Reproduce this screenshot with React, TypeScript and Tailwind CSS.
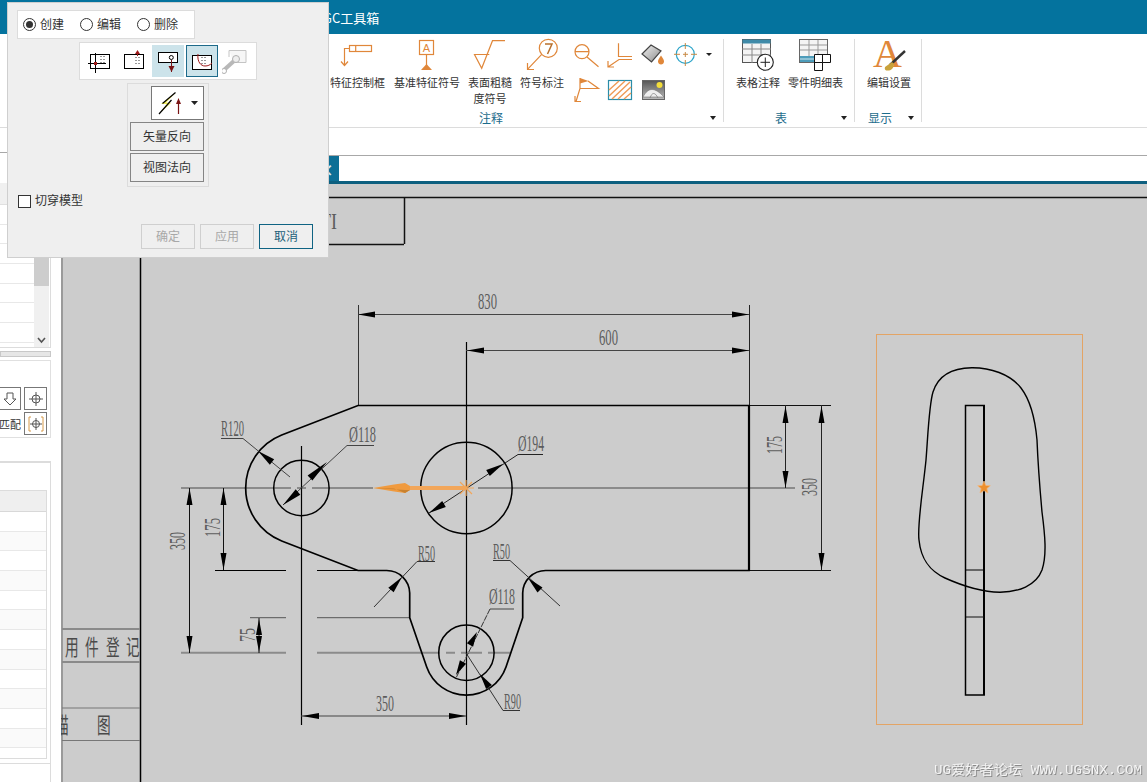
import React from "react";

const OR = "#e0873a";
const RED = "#7a1414";

function Arrow({ t, b, w = 7, c = "#000" }: { t: number[]; b: number[]; w?: number; c?: string }) {
  const dx = b[0] - t[0];
  const dy = b[1] - t[1];
  const l = Math.hypot(dx, dy) || 1;
  const nx = (-dy / l) * (w / 2);
  const ny = (dx / l) * (w / 2);
  return <polygon points={`${t[0]},${t[1]} ${b[0] + nx},${b[1] + ny} ${b[0] - nx},${b[1] - ny}`} fill={c} />;
}

function Dim({ x, y, s, len, size = 24 }: { x: number; y: number; s: string; len: number; size?: number }) {
  return (
    <text x={x} y={y} textLength={len} lengthAdjust="spacingAndGlyphs" fontSize={size} fill="#5c5c5c" className="font-['Liberation_Serif',serif]">
      {s}
    </text>
  );
}

function VDim({ x, y, s, len }: { x: number; y: number; s: string; len: number }) {
  return (
    <text x={x} y={y} transform={`rotate(-90 ${x} ${y})`} textLength={len} lengthAdjust="spacingAndGlyphs" fontSize={24} fill="#5c5c5c" className="font-['Liberation_Serif',serif]">
      {s}
    </text>
  );
}

function Cjk({ x, y, s }: { x: number; y: number; s: string }) {
  return (
    <text transform={`translate(${x} ${y}) scale(0.62 1)`} fontSize={22} fill="#4a4a4a" className="font-['Noto_Sans_CJK_SC',sans-serif]">
      {s}
    </text>
  );
}

function L({ p, c = "#222", w = 1 }: { p: number[]; c?: string; w?: number }) {
  return <line x1={p[0]} y1={p[1]} x2={p[2]} y2={p[3]} stroke={c} strokeWidth={w} />;
}

function Drawing() {
  const CL = "#8b8b8b";
  return (
    <svg width="1086" height="598" viewBox="61 184 1086 598" className="block shrink-0">
      {/* sheet frame */}
      <L p={[62, 184, 62, 782]} c="#8a8a8a" w={1.5} />
      <L p={[62, 197.5, 1147, 197.5]} c="#111" w={1.5} />
      <L p={[140.5, 197, 140.5, 782]} c="#000" w={1.5} />
      <L p={[404.5, 197, 404.5, 244]} c="#111" w={1.5} />
      <L p={[140, 244.5, 404, 244.5]} c="#111" w={1.5} />
      <Dim x={320} y={229} s="TI" len={17} />
      <L p={[62, 629, 140, 629]} c="#8a8a8a" w={2} />
      <L p={[62, 662, 140, 662]} c="#8a8a8a" w={2} />
      <L p={[62, 708, 140, 708]} c="#777" w={1} />
      <L p={[62, 740.5, 140, 740.5]} c="#777" w={1} />
      <Cjk x={65} y={655} s="用" />
      <Cjk x={85} y={655} s="件" />
      <Cjk x={106} y={655} s="登" />
      <Cjk x={126} y={655} s="记" />
      <Cjk x={55} y={733} s="描" />
      <Cjk x={97} y={733} s="图" />

      {/* centre lines */}
      <path d="M181 488H291M297 488H306M312 488H373M478 488H795" stroke={CL} strokeWidth={2} fill="none" />
      <path d="M181 652.7H286M317 652.7H440M446 652.7H455M461 652.7H482M488 652.7H510" stroke={CL} strokeWidth={2} fill="none" />
      <path d="M250 617.7H286M317 617.7H410" stroke="#555" strokeWidth={1} fill="none" />
      <path d="M215 570.5H286M317 570.5H358" stroke="#000" strokeWidth={1.2} fill="none" />
      <L p={[749, 405.5, 831, 405.5]} c="#111" w={1} />
      <L p={[749, 570.5, 831, 570.5]} c="#111" w={1} />

      {/* verticals */}
      <L p={[466.5, 342, 466.5, 725]} c="#000" w={1.2} />
      <L p={[301.5, 446, 301.5, 725]} c="#000" w={1.2} />
      <L p={[358.5, 305, 358.5, 405]} c="#333" w={1} />
      <L p={[749.5, 305, 749.5, 405]} c="#222" w={1} />

      {/* outline */}
      <path
        d="M358 405.5H749V570.5H546A23 23 0 0 0 522.7 593V617.7L506 667A42 42 0 0 1 426.7 667L409.7 617.7V593A23 23 0 0 0 386.7 570.5H358L281.7 541A57 57 0 0 1 281.7 435L358 405.5Z"
        fill="none"
        stroke="#000"
        strokeWidth={1.7}
      />
      <L p={[749, 405, 749, 571]} c="#000" w={2.2} />
      <circle cx={301.4} cy={488} r={27.7} fill="none" stroke="#000" strokeWidth={1.5} />
      <circle cx={466.4} cy={488} r={45.7} fill="none" stroke="#000" strokeWidth={1.5} />
      <circle cx={466.4} cy={652.7} r={27.7} fill="none" stroke="#000" strokeWidth={1.5} />

      {/* linear dimensions */}
      <L p={[358, 314.5, 749, 314.5]} c="#444" />
      <Arrow t={[358, 314.5]} b={[375, 314.5]} w={6} />
      <Arrow t={[749, 314.5]} b={[732, 314.5]} w={6} />
      <L p={[466, 350.5, 749, 350.5]} c="#444" />
      <Arrow t={[467, 350.5]} b={[484, 350.5]} w={6} />
      <Arrow t={[749, 350.5]} b={[732, 350.5]} w={6} />
      <L p={[301, 716, 466, 716]} c="#444" />
      <Arrow t={[302, 716]} b={[319, 716]} w={6} />
      <Arrow t={[466, 716]} b={[449, 716]} w={6} />
      <L p={[785.5, 405, 785.5, 488]} c="#222" />
      <Arrow t={[785.5, 406]} b={[785.5, 423]} w={6} />
      <Arrow t={[785.5, 488]} b={[785.5, 471]} w={6} />
      <L p={[821.5, 405, 821.5, 570]} c="#222" />
      <Arrow t={[821.5, 406]} b={[821.5, 423]} w={6} />
      <Arrow t={[821.5, 570]} b={[821.5, 553]} w={6} />
      <L p={[189.5, 488, 189.5, 653]} c="#111" />
      <Arrow t={[189.5, 488]} b={[189.5, 505]} w={6} />
      <Arrow t={[189.5, 653]} b={[189.5, 636]} w={6} />
      <L p={[223.5, 488, 223.5, 570]} c="#111" />
      <Arrow t={[223.5, 488]} b={[223.5, 505]} w={6} />
      <Arrow t={[223.5, 570]} b={[223.5, 553]} w={6} />
      <L p={[259, 618, 259, 653]} c="#111" />
      <Arrow t={[259, 619]} b={[259, 635]} w={6} />
      <Arrow t={[259, 652]} b={[259, 636]} w={6} />

      {/* leaders */}
      <path d="M221 438.5H243L290 477" stroke="#444" fill="none" />
      <Arrow t={[258, 451]} b={[272, 462]} w={7} />
      <path d="M374 445.5H347L283 505" stroke="#444" fill="none" />
      <Arrow t={[327, 462]} b={[310, 478]} w={7} />
      <Arrow t={[283, 505]} b={[298, 492]} w={7} />
      <path d="M543 454.5H518L429 513" stroke="#222" fill="none" />
      <Arrow t={[503, 464]} b={[488, 473]} w={7} />
      <Arrow t={[429, 513]} b={[444, 504]} w={7} />
      <path d="M435 561.5H417L374 607" stroke="#333" fill="none" />
      <Arrow t={[402, 577]} b={[391, 590]} w={7} />
      <path d="M493 560.5H510L560 606" stroke="#333" fill="none" />
      <Arrow t={[528, 578]} b={[540, 590]} w={7} />
      <path d="M514 609H490" stroke="#444" fill="none" />
      <path d="M490 609L456 678" stroke="#333" strokeDasharray="6 1" fill="none" />
      <Arrow t={[477, 632]} b={[470, 645]} w={7} />
      <Arrow t={[456, 675]} b={[463, 662]} w={7} />
      <path d="M520 710.5H503L466 653" stroke="#333" fill="none" />
      <Arrow t={[480, 674]} b={[489, 687]} w={7} />

      {/* dimension text */}
      <Dim x={478} y={309} s="830" len={19} />
      <Dim x={599} y={345} s="600" len={19} />
      <Dim x={376} y={711} s="350" len={18} />
      <Dim x={221} y={436} s="R120" len={23} />
      <Dim x={349} y={442} s="Ø118" len={27} />
      <Dim x={518} y={451} s="Ø194" len={26} />
      <Dim x={418} y={561} s="R50" len={17} />
      <Dim x={493} y={559} s="R50" len={17} />
      <Dim x={489} y={604} s="Ø118" len={26} />
      <Dim x={504} y={709} s="R90" len={17} />
      <VDim x={185} y={550} s="350" len={18} />
      <VDim x={220} y={537} s="175" len={19} />
      <VDim x={255} y={642} s="75" len={14} />
      <VDim x={782} y={454} s="175" len={18} />
      <VDim x={817} y={496} s="350" len={18} />

      {/* orange arrow on the section line */}
      <rect x={408} y={486} width={58} height={4} fill="#f2a65a" />
      <polygon points="373,488 394,484.5 405,483 410,486 410,490 405,493 394,491.5" fill="#f09a3e" />
      <polygon points="373,488 394,488.5 405,493 410,490 405,490" fill="#c9822f" />
      <path d="M460 482L472 494M472 482L460 494M466 480V496M458 488H474" stroke="#f2a65a" strokeWidth={1.2} />

      {/* right view */}
      <rect x={876.5} y={334.5} width={206} height={390} fill="none" stroke="#e3a465" strokeWidth={1} />
      <path
        d="M971.7 367.7C990 367.5 1010 374 1021 388C1031 401 1035 418 1037 440C1038 465 1040 490 1042 512C1045 535 1047 555 1042 570C1036 586 1018 592 1000 592.3C985 592 965 587 945 578C930 571 921 560 919 540C917 525 923 490 926 460C928 435 929 405 933 392C938 376 952 368 971.7 367.7Z"
        fill="none"
        stroke="#000"
        strokeWidth={1.4}
      />
      <rect x={965.5} y={405.5} width={18.7} height={289.5} fill="none" stroke="#000" strokeWidth={1.5} />
      <L p={[984, 405, 984, 695]} c="#000" w={2} />
      <L p={[966, 570, 984, 570]} c="#000" />
      <L p={[966, 617, 984, 617]} c="#111" />
      <polygon
        points="984,481 985.8,485.4 990.3,485.7 986.9,488.6 988,493 984,490.6 980,493 981.1,488.6 977.7,485.7 982.2,485.4"
        fill="#ec8f2e"
        stroke="#f2b67a"
        strokeWidth={0.8}
      />

      {/* watermark */}
      <text
        x={934}
        y={774}
        textLength={208}
        lengthAdjust="spacingAndGlyphs"
        fontSize={13}
        fill="#f4f4f4"
        className="font-['Liberation_Mono','Noto_Sans_CJK_SC',monospace] [filter:drop-shadow(1px_1px_0_#8a8a8a)]"
      >
        UG爱好者论坛 WWW.UGSNX.COM
      </text>
    </svg>
  );
}

function RibbonItem({ label, w, vb, children }: { label: React.ReactNode; w: number; vb: string; children: React.ReactNode }) {
  return (
    <div className="flex flex-col items-center" style={{ width: w }}>
      <svg width={w} height="36" viewBox={vb} className="block overflow-visible">
        {children}
      </svg>
      <div className="w-full text-center text-[11px] leading-[16px] text-[#333]">{label}</div>
    </div>
  );
}

function Tri({ c = "#222" }: { c?: string }) {
  return <span className="h-0 w-0 border-x-[3.5px] border-t-[4px] border-x-transparent" style={{ borderTopColor: c }} />;
}

function Ribbon() {
  return (
    <div className="flex h-[94px] shrink-0 border-b border-[#dcdcdc] bg-white">
      {/* annotation group */}
      <div className="relative ml-[275px] flex h-[93px] w-[448px] flex-col border-r-0">
        <div className="flex flex-1 pl-[55px] pt-[4px]">
          <RibbonItem w={55} vb="330 38 55 36" label="特征控制框">
            <g fill="none" stroke={OR} strokeWidth={1.2}>
              <rect x={349.5} y={45.5} width={22} height={6} />
              <path d="M355.7 45.5V51.5M349 48.5H344.5V65" />
              <path d="M341 61.5L344.5 65.5L348 61.5" />
            </g>
          </RibbonItem>
          <div className="w-[9px]" />
          <RibbonItem w={66} vb="394 38 66 36" label="基准特征符号">
            <rect x={419.5} y={40.5} width={14} height={14} fill="none" stroke={OR} strokeWidth={1.2} />
            <text x={426.5} y={52} textAnchor="middle" fontSize={11} fill={OR} className="font-['Liberation_Sans',sans-serif]">A</text>
            <path d="M426.5 54.5V66" stroke={OR} strokeWidth={1.2} />
            <polygon points="421,70 432,70 426.5,64" fill={OR} />
          </RibbonItem>
          <div className="w-[7px]" />
          <RibbonItem
            w={46}
            vb="467 38 46 36"
            label={
              <>
                表面粗糙
                <br />
                度符号
              </>
            }
          >
            <path d="M489.3 54.5H474.5L481.7 68.3L492.5 40.7H505" fill="none" stroke={OR} strokeWidth={1.2} />
          </RibbonItem>
          <div className="w-[7px]" />
          <RibbonItem w={44} vb="520 38 44 36" label="符号标注">
            <circle cx={548.3} cy={48.3} r={9} fill="none" stroke={OR} strokeWidth={1.2} />
            <path d="M545 44H552L547.5 54" fill="none" stroke="#b8702c" strokeWidth={1.5} />
            <path d="M541.7 54.3L527.5 69.3M527.5 63V69.5H534" fill="none" stroke={OR} strokeWidth={1.2} />
          </RibbonItem>
          <svg width="146" height="68" viewBox="570 38 146 68" className="ml-[6px] block">
            <g fill="none" stroke={OR} strokeWidth={1.2}>
              <circle cx={582} cy={51.7} r={7} />
              <path d="M575 51.7H589M587 57L598.5 66.7" />
              <path d="M618.5 43.3V56.5H632M632 59.5H619L608 67M608 61V67H614" />
              <path d="M580 78V88.5L576 101.5M575 96V101.5H581M580 88.5H598.5L588 81" />
            </g>
            <polygon points="580,78 588.5,81 580,83.5" fill={OR} />
            <defs>
              <linearGradient id="bucket" x1="0" y1="0" x2="1" y2="1">
                <stop offset="0" stopColor="#f2f2f2" />
                <stop offset="1" stopColor="#8c8c8c" />
              </linearGradient>
              <linearGradient id="pic" x1="0" y1="0" x2="0" y2="1">
                <stop offset="0" stopColor="#555" />
                <stop offset="1" stopColor="#bbb" />
              </linearGradient>
            </defs>
            <polygon points="642,54 651,45 661,51 651.5,62" fill="url(#bucket)" stroke="#444" strokeWidth={1.2} />
            <path d="M661 55.5C659 58.5 658 60 658 61.5C658 63.5 659.5 64.5 661 64.5C662.5 64.5 664 63.5 664 61.5C664 60 663 58.5 661 55.5Z" fill={OR} />
            <circle cx={685.3} cy={54.3} r={9} fill="none" stroke="#2ba4c9" strokeWidth={1.2} />
            <path d="M685.3 43V49M685.3 52V57M685.3 60V66M674 54.3H680M683 54.3H688M691 54.3H697" stroke="#c98a45" strokeWidth={1} />
            <polygon points="706,53 712,53 709,56" fill="#222" />
            <rect x={608.5} y={80.5} width={23} height={19} fill="#fff" stroke="#2a8da8" strokeWidth={1.2} />
            <path d="M609 90L619 81M609 96L625 81M612 99L630 82M618 99L631 87M624 99L631 93" stroke="#ef9a55" strokeWidth={1.4} />
            <rect x={642.5} y={80.5} width={22} height={19} fill="url(#pic)" stroke="#666" />
            <circle cx={659.5} cy={85} r={3} fill="#f3dd3a" />
            <path d="M643 97C648 87 655 87 664 97Z" fill="#eee" stroke="#777" strokeWidth={0.6} />
            <path d="M650 98C652 92 655 92 658 98" fill="none" stroke="#777" strokeWidth={0.7} />
          </svg>
        </div>
        <div className="flex h-[21px] items-start justify-center pr-[16px] pt-[4px] text-[12px] leading-[16px] text-[#1c6c8c]">注释</div>
        <span className="absolute bottom-[7px] right-[7px] flex">
          <Tri />
        </span>
      </div>
      <div className="my-[5px] w-[1px] bg-[#dcdcdc]" />

      {/* table group */}
      <div className="relative flex h-[93px] w-[130px] flex-col">
        <div className="flex flex-1 gap-[8px] pl-[12px] pt-[4px]">
          <RibbonItem w={44} vb="736 38 44 36" label="表格注释">
            <rect x={742.5} y={39.5} width={28} height={23} fill="#f4f4f4" stroke="#555" />
            <rect x={742.5} y={39.5} width={28} height={4} fill="#3f8aa8" />
            <path d="M742 49H771M742 55H771M752 44V63M761 44V63" stroke="#888" />
            <circle cx={765.3} cy={62.3} r={8} fill="#fff" stroke="#222" strokeWidth={1.1} />
            <path d="M765.3 57.5V67M760.5 62.3H770" stroke="#222" strokeWidth={1} />
          </RibbonItem>
          <RibbonItem w={55} vb="788 38 55 36" label="零件明细表">
            <rect x={799.5} y={39.5} width={28} height={23} fill="#f4f4f4" stroke="#666" />
            <path d="M800 45H827M800 50H827M809 40V56M818 40V56" stroke="#999" />
            <rect x={800} y={56} width={27} height={6} fill="#4d9cba" />
            <path d="M800 59H827" stroke="#cfe6ee" />
            <path d="M814.5 54.5H830.5V62.5H822.5V70.5H814.5ZM814.5 62.5H822.5M822.5 54.5V62.5" fill="#fff" stroke="#111" strokeWidth={1} />
          </RibbonItem>
        </div>
        <div className="flex h-[21px] items-start justify-center pr-[16px] pt-[4px] text-[12px] leading-[16px] text-[#1c6c8c]">表</div>
        <span className="absolute bottom-[7px] right-[7px] flex">
          <Tri />
        </span>
      </div>
      <div className="my-[5px] w-[1px] bg-[#dcdcdc]" />

      {/* display group */}
      <div className="relative flex h-[93px] w-[66px] flex-col">
        <div className="flex flex-1 pl-[12px] pt-[4px]">
          <RibbonItem w={44} vb="867 38 44 36" label="编辑设置">
            <text x={887.5} y={66.5} textAnchor="middle" fontSize={40} fill={OR} className="font-['Liberation_Serif',serif]">A</text>
            <path d="M905 51L890 65" stroke="#333" strokeWidth={2.4} />
            <path d="M892 62L885 67C884 70 886 71 889 70.5C892 70 894 67 894 64Z" fill="#c9a23c" />
          </RibbonItem>
        </div>
        <div className="flex h-[21px] items-start justify-center pr-[16px] pt-[4px] text-[12px] leading-[16px] text-[#1c6c8c]">显示</div>
        <span className="absolute bottom-[7px] right-[7px] flex">
          <Tri />
        </span>
      </div>
      <div className="my-[5px] w-[1px] bg-[#dcdcdc]" />
    </div>
  );
}

function Sidebar() {
  const upper = [0, 1, 2, 3, 4, 5, 6];
  const rows = [0, 1, 2, 3, 4, 5, 6, 7, 8, 9, 10, 11];
  return (
    <div className="flex w-[61px] shrink-0 flex-col bg-white">
      <div className="h-[25px] shrink-0 border-b border-[#a8a8a8]" />
      <div className="h-[30px] shrink-0" />
      <div className="flex h-[165px] w-[51px] shrink-0 border-r border-b border-[#dcdcdc]">
        <div className="flex w-[34px] flex-col">
          <div className="h-[22px] shrink-0 border-b border-[#e0e0e0] bg-[#f0f0f0]" />
          {upper.map((i) => (
            <div key={i} className="h-[19.7px] shrink-0 border-b border-[#e8e8e8]" />
          ))}
        </div>
        <div className="flex w-[15px] flex-col items-center bg-[#f0f0f0]">
          <div className="h-[103px] w-full bg-[#cdcdcd]" />
          <svg width="9" height="7" viewBox="0 0 9 7" className="mt-[51px] block">
            <path d="M1 1L4.5 5L8 1" fill="none" stroke="#555" strokeWidth={1.6} />
          </svg>
        </div>
      </div>
      <div className="mt-[3px] h-[6px] w-[51px] shrink-0 border border-[#c8c8c8] bg-[#e6e6e6]" />
      <div className="mt-[3px] flex h-[78px] w-[51px] shrink-0 flex-col gap-[2px] border-y border-r border-[#e0e0e0] pt-[26px]">
        <div className="flex items-start justify-end gap-[3px] pr-[3px]">
          <div className="flex h-[23px] w-[21px] items-center justify-center border border-l-0 border-[#777] bg-white">
            <svg width="16" height="16" viewBox="0 0 16 16">
              <path d="M5 2H11V8H14L8 14L2 8H5Z" fill="none" stroke="#555" strokeWidth={1} />
            </svg>
          </div>
          <div className="flex h-[23px] w-[23px] items-center justify-center border border-[#777] bg-white">
            <svg width="16" height="16" viewBox="0 0 16 16">
              <circle cx={8} cy={8} r={4} fill="none" stroke="#555" />
              <path d="M8 1V15M1 8H15" stroke="#555" />
            </svg>
          </div>
        </div>
        <div className="flex items-center justify-end gap-[3px] pr-[3px]">
          <span className="flex w-[21px] justify-end overflow-hidden whitespace-nowrap text-[11px] leading-[16px] text-[#333]">匹配</span>
          <div className="flex h-[23px] w-[23px] items-center justify-center border border-[#777] bg-white">
            <svg width="18" height="18" viewBox="0 0 18 18">
              <path d="M4 2H2V16H4M14 2H16V16H14" fill="none" stroke="#d69a4a" />
              <circle cx={9} cy={9} r={3.5} fill="none" stroke="#555" />
              <path d="M9 3V15M3 9H15" stroke="#555" />
            </svg>
          </div>
        </div>
      </div>
      <div className="h-[23px] shrink-0" />
      <div className="h-[302px] w-[51px] shrink-0 border-t-2 border-r border-[#dcdcdc] pt-[27px]">
        <div className="flex h-[269px] w-[47px] flex-col border-y border-r border-[#dcdcdc]">
          <div className="h-[21px] shrink-0 border-b border-[#d8d8d8] bg-[#efefef]" />
          {rows.map((i) => (
            <div key={i} className={`h-[19.7px] shrink-0 border-b border-[#e8e8e8] ${i % 2 === 0 ? "bg-white" : "bg-[#fafafa]"}`} />
          ))}
        </div>
      </div>
      <div className="w-[51px] flex-1 border-t border-r border-[#dcdcdc]" />
    </div>
  );
}

function Cell({ kind, children }: { kind?: "hot" | "sel"; children: React.ReactNode }) {
  const cls =
    kind === "sel"
      ? "bg-[#cce3ea] border border-[#1d6a8a]"
      : kind === "hot"
        ? "bg-[#cce3ea] border border-[#cce3ea]"
        : "border border-transparent";
  return <div className={`flex h-[32px] w-[32px] items-center justify-center ${cls}`}>{children}</div>;
}

function Dots({ x, y }: { x: number; y: number }) {
  return <path d={`M${x} ${y}v1M${x + 3} ${y}v1M${x} ${y + 3}v1M${x + 3} ${y + 3}v1M${x} ${y + 6}v1M${x + 3} ${y + 6}v1`} stroke="#333" strokeWidth={1} />;
}

function Radio({ on, label }: { on?: boolean; label: string }) {
  return (
    <div className="flex w-[57px] items-center gap-[4px]">
      <span className="flex h-[13px] w-[13px] items-center justify-center rounded-full border border-[#333] bg-white">
        {on && <span className="h-[7px] w-[7px] rounded-full bg-[#333]" />}
      </span>
      <span className="pb-[2px] text-[12px] leading-[16px] text-[#333]">{label}</span>
    </div>
  );
}

function Btn({ label, tone }: { label: string; tone: "off" | "on" }) {
  return (
    <div
      className={`flex h-[25px] w-[54px] items-center justify-center border pb-[2px] text-[12px] ${
        tone === "off" ? "border-[#cfcfcf] text-[#a8a8a8]" : "border-[#0f6383] text-[#1c5f7a]"
      }`}
    >
      {label}
    </div>
  );
}

function Dialog() {
  return (
    <div className="absolute left-[7px] top-[2px] flex h-[256px] w-[322px] flex-col border border-[#cfcfcf] bg-[#efefef] pl-[9px] pt-[7px]">
      <div className="flex h-[29px] w-[178px] items-center border border-[#dcdcdc] bg-white pl-[5px]">
        <Radio on label="创建" />
        <Radio label="编辑" />
        <Radio label="删除" />
      </div>
      <div className="ml-[62px] mt-[3px] flex h-[38px] w-[178px] items-center justify-center border border-[#dcdcdc] bg-white">
        <Cell>
          <svg width="28" height="28" viewBox="86 47 28 28">
            <rect x={90.5} y={54.5} width={19} height={14} fill="#fff" stroke="#000" />
            <path d="M95.5 53V73M88 63.5H106" stroke="#000" />
            <Dots x={101} y={56} />
            <rect x={94} y={62} width={3} height={3} fill="#a01818" />
          </svg>
        </Cell>
        <div className="w-[2px]" />
        <Cell>
          <svg width="28" height="28" viewBox="120 47 28 28">
            <rect x={124.5} y={54.5} width={19} height={14} fill="#fff" stroke="#000" />
            <Dots x={136} y={57} />
            <path d="M137.5 50L135 54H140Z" fill="#a01818" />
            <path d="M137.5 52V56" stroke="#a01818" />
          </svg>
        </Cell>
        <div className="w-[2px]" />
        <Cell kind="hot">
          <svg width="28" height="28" viewBox="154 47 28 28">
            <rect x={158.5} y={52.5} width={19} height={10} fill="#fff" stroke="#000" />
            <circle cx={171.3} cy={57.5} r={2} fill="none" stroke="#000" />
            <path d="M171.5 60V72" stroke={RED} />
            <path d="M168.5 66H174.5L171.5 72Z" fill={RED} />
          </svg>
        </Cell>
        <div className="w-[2px]" />
        <Cell kind="sel">
          <svg width="28" height="28" viewBox="188 47 28 28">
            <rect x={192.5} y={55.5} width={19} height={14} fill="#fff" stroke="#000" />
            <Dots x={202} y={57} />
            <path d="M198 54C197 62 201 66 205 66C208 66 210 65 212 63" fill="none" stroke="#a01818" />
          </svg>
        </Cell>
        <div className="w-[2px]" />
        <Cell>
          <svg width="28" height="28" viewBox="222 47 28 28">
            <path d="M229 50.5H246V62.5H234" fill="#f6f6f6" stroke="#c4c4c4" />
            <path d="M229 50.5V57" stroke="#c4c4c4" />
            <path d="M224 70L235 60" stroke="#b8b8b8" strokeWidth={4} />
            <circle cx={236} cy={59} r={3.5} fill="#eee" stroke="#b0b0b0" />
            <circle cx={224} cy={71} r={2.5} fill="#fff" stroke="#b0b0b0" />
          </svg>
        </Cell>
      </div>
      <div className="ml-[110px] mt-[3px] flex h-[104px] w-[82px] flex-col items-end border border-[#dcdcdc] pr-[4px] pt-[2px]">
        <div className="flex h-[34px] w-[53px] items-center border border-[#777] bg-white">
          <svg width="51" height="32" viewBox="152 87 51 32" className="block">
            <polygon points="176,92.5 161,104 167,104 159,114 171,103 166,102.5" fill="#f2ee55" />
            <path d="M175.5 92.5L162.5 103.5M171.5 100L159 114" fill="none" stroke="#000" strokeWidth={1.2} />
            <path d="M178.5 102V114" stroke={RED} strokeWidth={1.2} />
            <path d="M178.5 98L176 104H181Z" fill={RED} />
            <path d="M191 101H198L194.5 105Z" fill="#222" />
          </svg>
        </div>
        <div className="mt-[2px] flex h-[29px] w-[74px] items-center justify-center border border-[#858585] pb-[2px] text-[12px] text-[#333]">矢量反向</div>
        <div className="mt-[2px] flex h-[29px] w-[74px] items-center justify-center border border-[#858585] pb-[2px] text-[12px] text-[#333]">视图法向</div>
      </div>
      <div className="mt-[5px] flex items-center gap-[4px] pl-[1px]">
        <span className="h-[13px] w-[13px] border border-[#333] bg-white" />
        <span className="pb-[2px] text-[12px] leading-[16px] text-[#333]">切穿模型</span>
      </div>
      <div className="mt-[14px] flex gap-[5px] pl-[124px]">
        <Btn label="确定" tone="off" />
        <Btn label="应用" tone="off" />
        <Btn label="取消" tone="on" />
      </div>
    </div>
  );
}

export default function App() {
  return (
    <div className="relative flex h-[782px] w-[1147px] flex-col overflow-hidden bg-white font-['Noto_Sans_CJK_SC','Liberation_Sans',sans-serif]">
      <div className="flex h-[34px] shrink-0 items-center bg-[#04739e] pl-[323px] pt-[1px] text-[13px] text-white">GC工具箱</div>
      <Ribbon />
      <div className="flex min-h-0 flex-1">
        <Sidebar />
        <div className="flex min-w-0 flex-1 flex-col">
          <div className="h-[28px] shrink-0 border-b border-[#a8a8a8] bg-white" />
          <div className="flex h-[25px] shrink-0 bg-white pl-[238px]">
            <div className="flex h-full w-[40px] items-center justify-end bg-[#0d6f96] pr-[5px] text-[16px] font-bold text-[#dfeef4]">×</div>
          </div>
          <div className="h-[3px] shrink-0 bg-[#0d5f7f]" />
          <div className="min-h-0 flex-1 overflow-hidden bg-[#cccccc]">
            <Drawing />
          </div>
        </div>
      </div>
      <Dialog />
    </div>
  );
}
